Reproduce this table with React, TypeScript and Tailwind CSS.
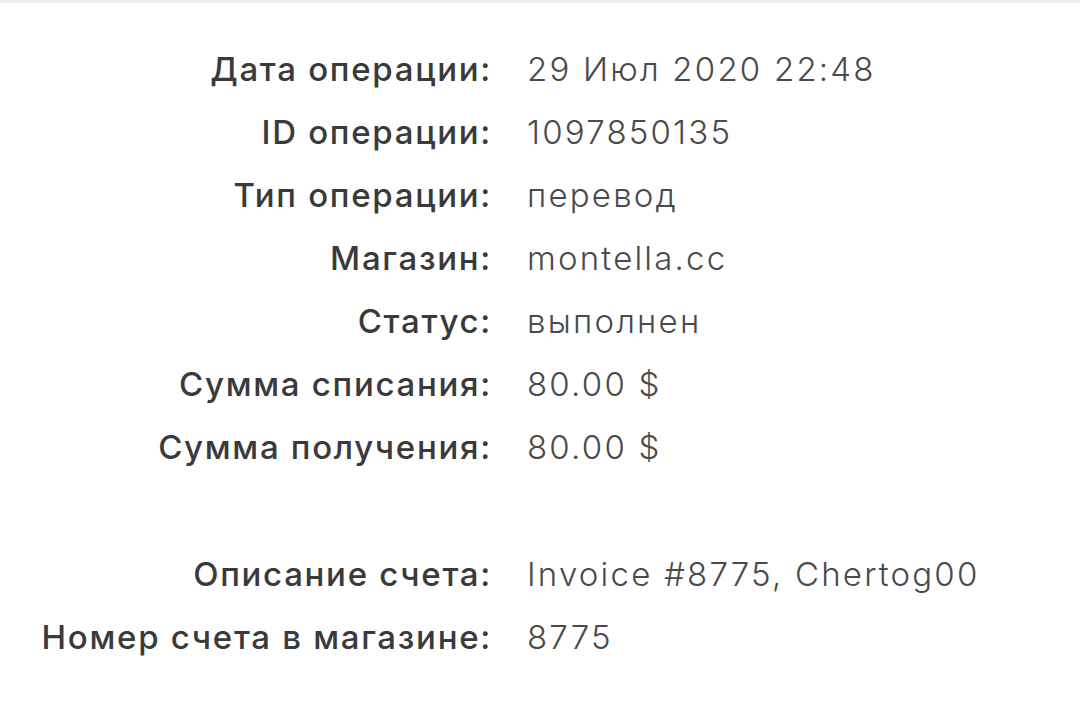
import React from "react";

const rows: [string, string][] = [
  ["Дата операции:", "29 Июл 2020 22:48"],
  ["ID операции:", "1097850135"],
  ["Тип операции:", "перевод"],
  ["Магазин:", "montella.cc"],
  ["Статус:", "выполнен"],
  ["Сумма списания:", "80.00 $"],
  ["Сумма получения:", "80.00 $"],
];

const rows2: [string, string][] = [
  ["Описание счета:", "Invoice #8775, Chertog00"],
  ["Номер счета в магазине:", "8775"],
];

function Row({ l, v }: { l: string; v: string }) {
  return (
    <>
      <div className="text-right font-medium tracking-[1.7px] text-[#3a3a3a] whitespace-nowrap">{l}</div>
      <div className="font-light tracking-[2.2px] text-[#4a4a4a] whitespace-nowrap">{v}</div>
    </>
  );
}

export default function App() {
  return (
    <div className="w-[1080px] h-[719px] bg-white overflow-hidden" style={{ fontFamily: "Inter, 'Noto Sans', sans-serif" }}>
      <div className="h-[3px] bg-[#efefef]" />
      <div className="grid grid-cols-[492px_1fr] gap-x-[35px] text-[33px] leading-[63px] pt-[35px]">
        {rows.map(([l, v]) => (
          <Row key={l} l={l} v={v} />
        ))}
        <div className="col-span-2 h-[64px]" />
        {rows2.map(([l, v]) => (
          <Row key={l} l={l} v={v} />
        ))}
      </div>
    </div>
  );
}
